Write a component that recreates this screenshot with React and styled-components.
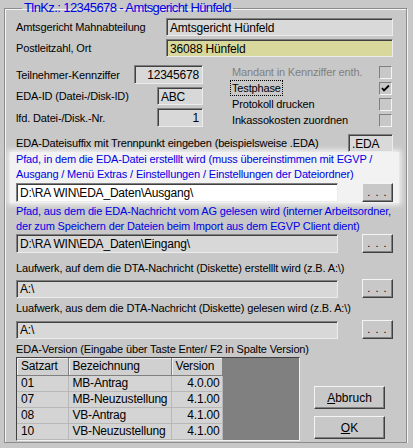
import React from "react";
import styled, { createGlobalStyle } from "styled-components";

const GlobalStyle = createGlobalStyle`
  html, body {
    margin: 0;
    padding: 0;
    background: #c8c8c8;
  }
  body {
    font-family: "Liberation Sans", Arial, sans-serif;
    font-size: 11px;
    color: #000;
  }
`;

const Frame = styled.fieldset`
  box-sizing: border-box;
  margin: 0 6px 0 4px;
  padding: 0 13px 0 11px;
  height: 443px;
  border: 1px solid #8c8c8c;
  box-shadow: 1px 1px 0 #f4f4f4, inset 1px 1px 0 #f4f4f4;
  min-width: 0;
  overflow: hidden;
`;

const Legend = styled.legend`
  margin-left: 6px;
  padding: 0 2px;
  color: #0000e6;
  font-size: 13px;
  letter-spacing: -0.6px;
  line-height: 16px;
`;

const Row = styled.div`
  display: flex;
  align-items: center;
  justify-content: space-between;
  margin-top: ${(p) => p.$top || 0}px;
  height: ${(p) => p.$h || 18}px;
`;

const Label = styled.span`
  letter-spacing: -0.15px;
  white-space: nowrap;
  color: ${(p) => (p.$disabled ? "#808080" : "#000")};
`;

const Field = styled.div`
  box-sizing: border-box;
  flex: ${(p) => (p.$w ? "none" : "1")};
  width: ${(p) => (p.$w ? `${p.$w}px` : "auto")};
  height: ${(p) => p.$h || 18}px;
  border: 1px solid;
  border-color: #808080 #ececec #ececec #808080;
  box-shadow: inset 1px 1px 0 #404040;
  background: ${(p) => p.$bg || "#d8d8d8"};
  padding: 1px 3px 0 3px;
  display: flex;
  align-items: center;
  justify-content: ${(p) => (p.$right ? "flex-end" : "flex-start")};
  font-size: 12px;
  letter-spacing: -0.2px;
  white-space: nowrap;
  overflow: hidden;
`;

const Columns = styled.div`
  display: flex;
  margin-top: 8px;
  gap: 29px;
`;

const LeftCol = styled.div`
  width: 187px;
  display: flex;
  flex-direction: column;
`;

const RightCol = styled.div`
  flex: 1;
  display: flex;
  flex-direction: column;
  margin-top: -1px;
  padding-right: 1px;
`;

const CheckRow = styled.div`
  display: flex;
  align-items: center;
  justify-content: space-between;
  height: 16px;
`;

const Focus = styled.span`
  outline: 1px dotted #000;
  outline-offset: 1px;
  letter-spacing: -0.15px;
`;

const Box = styled.span`
  box-sizing: border-box;
  width: 13px;
  height: 13px;
  border: 1px solid;
  border-color: #808080 #f4f4f4 #f4f4f4 #808080;
  background: #c8c8c8;
  display: flex;
  align-items: center;
  justify-content: center;
`;

const Highlight = styled.div`
  margin: 0 -6px;
  padding: 0 6px 1px 6px;
  background: rgba(246, 246, 246, 0.9);
  box-shadow: 0 0 5px 2px rgba(246, 246, 246, 0.9);
`;

const Hint = styled.div`
  color: ${(p) => (p.$plain ? "#000" : "#0000e6")};
  line-height: 15px;
  letter-spacing: -0.15px;
  margin-top: ${(p) => p.$top || 0}px;
  white-space: nowrap;
`;

const PathRow = styled.div`
  display: flex;
  align-items: center;
  gap: 24px;
  margin-top: ${(p) => p.$top || 0}px;
`;

const DotButton = styled.button`
  box-sizing: border-box;
  width: 31px;
  height: 19px;
  flex: none;
  padding: 0 0 3px 0;
  background: #c8c8c8;
  border: 1px solid;
  border-color: #f4f4f4 #404040 #404040 #f4f4f4;
  box-shadow: inset -1px -1px 0 #808080;
  font-family: inherit;
  font-size: 11px;
  letter-spacing: 1px;
  display: flex;
  align-items: flex-end;
  justify-content: center;
  color: #000;
`;

const Bottom = styled.div`
  display: flex;
  align-items: flex-end;
  gap: 14px;
`;

const Grid = styled.div`
  box-sizing: border-box;
  width: 284px;
  height: 84px;
  border: 1px solid;
  border-color: #404040 #f0f0f0 #f0f0f0 #404040;
  background: #808080;
  display: flex;
  align-items: flex-start;
  overflow: hidden;
`;

const Table = styled.table`
  border-collapse: collapse;
  table-layout: fixed;
  width: 204px;
  background: #d4d4d4;
  font-size: 12px;
  letter-spacing: -0.2px;
  white-space: nowrap;
`;

const Th = styled.th`
  box-sizing: border-box;
  width: ${(p) => p.$w}px;
  height: 17px;
  padding: 0 4px;
  font-weight: normal;
  text-align: left;
  background: #d0d0d0;
  border-right: 1px solid #808080;
  border-bottom: 1px solid #808080;
  box-shadow: inset 1px 1px 0 #f0f0f0;
`;

const Td = styled.td`
  box-sizing: border-box;
  height: 16px;
  padding: 0 ${(p) => (p.$right ? 2 : 4)}px 0 4px;
  text-align: ${(p) => (p.$right ? "right" : "left")};
  border-right: 1px solid #b8b8b8;
  border-bottom: 1px solid #b8b8b8;
  overflow: hidden;
`;

const Actions = styled.div`
  display: flex;
  flex-direction: column;
  gap: 7px;
  margin-bottom: 2px;
`;

const Button = styled.button`
  box-sizing: border-box;
  width: 71px;
  height: 23px;
  background: #c8c8c8;
  border: 1px solid;
  border-color: #f4f4f4 #404040 #404040 #f4f4f4;
  box-shadow: inset -1px -1px 0 #808080;
  font-family: inherit;
  font-size: 12px;
  color: #000;
  padding: 0;
  u {
    text-decoration-thickness: 1px;
    text-underline-offset: 1px;
  }
`;

const Check = () => (
  <svg width="9" height="9" viewBox="0 0 9 9">
    <path d="M1 4 L3 6.5 L8 1.5" stroke="#000" strokeWidth="1.8" fill="none" />
  </svg>
);

const rows = [
  ["01", "MB-Antrag", "4.0.00"],
  ["07", "MB-Neuzustellung", "4.1.00"],
  ["08", "VB-Antrag", "4.1.00"],
  ["10", "VB-Neuzustellung", "4.1.00"],
];

export default function App() {
  return (
    <>
      <GlobalStyle />
      <Frame>
        <Legend>TlnKz.: 12345678 - Amtsgericht Hünfeld</Legend>

        <Row $top={2}>
          <Label>Amtsgericht Mahnabteilung</Label>
          <Field $w={227} $bg="#d9d9d9">Amtsgericht Hünfeld</Field>
        </Row>
        <Row $top={3}>
          <Label>Postleitzahl, Ort</Label>
          <Field $w={227} $bg="#d8d89c">36088 Hünfeld</Field>
        </Row>

        <Columns>
          <LeftCol>
            <Row $h={19}>
              <Label>Teilnehmer-Kennziffer</Label>
              <Field $w={69} $h={19} $right>12345678</Field>
            </Row>
            <Row $top={3} $h={18}>
              <Label>EDA-ID (Datei-/Disk-ID)</Label>
              <Field $w={46}>ABC</Field>
            </Row>
            <Row $top={3} $h={19}>
              <Label>lfd. Datei-/Disk.-Nr.</Label>
              <Field $w={46} $h={19} $right>1</Field>
            </Row>
          </LeftCol>
          <RightCol>
            <CheckRow>
              <Label $disabled>Mandant in Kennziffer enth.</Label>
              <Box />
            </CheckRow>
            <CheckRow>
              <Focus>Testphase</Focus>
              <Box>
                <Check />
              </Box>
            </CheckRow>
            <CheckRow>
              <Label>Protokoll drucken</Label>
              <Box />
            </CheckRow>
            <CheckRow>
              <Label>Inkassokosten zuordnen</Label>
              <Box />
            </CheckRow>
          </RightCol>
        </Columns>

        <Row $top={6}>
          <Label>EDA-Dateisuffix mit Trennpunkt eingeben (beispielsweise .EDA)</Label>
          <Field $w={45} $bg="#d9d9d9">.EDA</Field>
        </Row>

        <Highlight>
          <Hint>
            Pfad, in dem die EDA-Datei erstelllt wird (muss übereinstimmen mit EGVP /
            <br />
            Ausgang / Menü Extras / Einstellungen / Einstellungen der Dateiordner)
          </Hint>
          <PathRow $top={1}>
            <Field $h={19} $bg="#ffffff">D:\RA WIN\EDA_Daten\Ausgang\</Field>
            <DotButton>. . .</DotButton>
          </PathRow>
        </Highlight>

        <Hint $top={1}>
          Pfad, aus dem die EDA-Nachricht vom AG gelesen wird (interner Arbeitsordner,
          <br />
          der zum Speichern der Dateien beim Import aus dem EGVP Client dient)
        </Hint>
        <PathRow>
          <Field $h={19}>D:\RA WIN\EDA_Daten\Eingang\</Field>
          <DotButton>. . .</DotButton>
        </PathRow>

        <Hint $plain $top={8}>
          Laufwerk, auf dem die DTA-Nachricht (Diskette) erstelllt wird (z.B. A:\)
        </Hint>
        <PathRow $top={3}>
          <Field $h={18}>A:\</Field>
          <DotButton>. . .</DotButton>
        </PathRow>

        <Hint $plain $top={3}>
          Luafwerk, aus dem die DTA-Nachricht (Diskette) gelesen wird (z.B. A:\)
        </Hint>
        <PathRow $top={4}>
          <Field $h={18}>A:\</Field>
          <DotButton>. . .</DotButton>
        </PathRow>

        <Hint $plain $top={3}>
          EDA-Version (Eingabe über Taste Enter/ F2 in Spalte Version)
        </Hint>

        <Bottom>
          <Grid>
            <Table>
              <colgroup>
                <col style={{ width: 51 }} />
                <col style={{ width: 103 }} />
                <col style={{ width: 51 }} />
              </colgroup>
              <thead>
                <tr>
                  <Th>Satzart</Th>
                  <Th>Bezeichnung</Th>
                  <Th>Version</Th>
                </tr>
              </thead>
              <tbody>
                {rows.map(([a, b, c]) => (
                  <tr key={a}>
                    <Td>{a}</Td>
                    <Td>{b}</Td>
                    <Td $right>{c}</Td>
                  </tr>
                ))}
              </tbody>
            </Table>
          </Grid>
          <Actions>
            <Button>
              <u>A</u>bbruch
            </Button>
            <Button>
              <u>O</u>K
            </Button>
          </Actions>
        </Bottom>
      </Frame>
    </>
  );
}
